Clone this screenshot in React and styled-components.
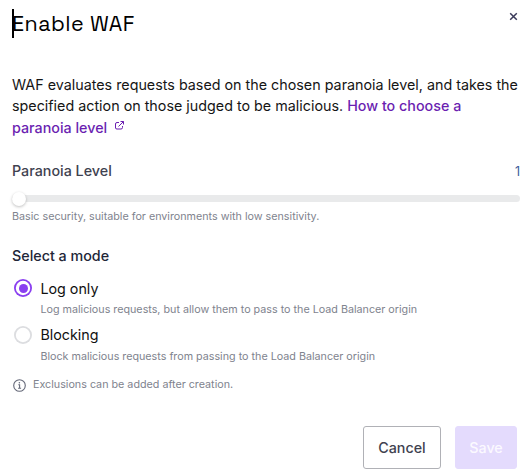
import React from "react";
import styled, { createGlobalStyle } from "styled-components";

const GlobalStyle = createGlobalStyle`
  * { box-sizing: border-box; }
  body { margin: 0; background: #fff; font-family: Inter, sans-serif; color: #151a2d; }
`;

const Dialog = styled.main`
  width: 523px;
  height: 472px;
  padding: 0 3px 0 12px;
  overflow: hidden;
  background: #fff;
`;

const Header = styled.header`
  display: flex;
  justify-content: space-between;
  height: 74px;
  padding-top: 9px;
`;

const Title = styled.h1`
  margin: 0;
  height: 29px;
  border-left: 2px solid #000;
  font-family: "Space Grotesk", Inter, sans-serif;
  font-size: 21.5px;
  font-weight: 400;
  line-height: 29px;
  letter-spacing: 0.45px;
  color: #000;
  text-indent: -2px;
`;

const CloseButton = styled.button`
  width: 9px;
  height: 9px;
  margin: 3px 2px 0 0;
  padding: 0;
  border: 0;
  background: none;
  color: #3b3b5a;
  svg { display: block; }
`;

const Intro = styled.p`
  margin: 0;
  height: 87px;
  font-size: 14.32px;
  line-height: 21.4px;
  color: #151515;
  white-space: nowrap;
`;

const DocLink = styled.a`
  font-weight: 500;
  color: #6b1fb1;
  svg { margin-left: 8px; vertical-align: 3px; }
`;

const FieldHead = styled.div`
  display: flex;
  justify-content: space-between;
  height: 20px;
  line-height: 20px;
`;

const Label = styled.span`
  font-size: 14.3px;
  font-weight: 500;
  line-height: 20px;
  color: ${(p) => (p.$strong ? "#222638" : "#3f4250")};
`;

const LevelValue = styled.output`
  font-size: 12.5px;
  line-height: 21px;
  color: #3b5c9c;
`;

const Slider = styled.div`
  display: flex;
  align-items: center;
  width: 508px;
  height: 7px;
  margin-top: 14px;
  border-radius: 4px;
  background: #e9eaeb;
`;

const Thumb = styled.span`
  width: 14px;
  height: 14px;
  border-radius: 50%;
  background: #fff;
  box-shadow: 0 1px 3px rgba(0, 0, 0, 0.25);
`;

const Hint = styled.p`
  margin: 0;
  font-size: 10.74px;
  line-height: 16px;
  color: #80838e;
  white-space: nowrap;
`;

const SliderHint = styled(Hint)`
  margin-top: 7px;
`;

const ModeGroup = styled.section`
  margin-top: 20px;
`;

const Option = styled.div`
  display: grid;
  grid-template-columns: 28.4px 1fr;
  align-items: center;
  grid-template-rows: 22px ${(p) => (p.$checked ? 19 : 21)}px;
  margin-top: ${(p) => p.$gap}px;
  ${Hint} { grid-column: 2; }
`;

const Radio = styled.span`
  display: grid;
  place-items: center;
  width: 18px;
  height: 18px;
  margin: ${(p) => (p.$checked ? -2 : 0)}px 0 0 2px;
  border: 1.8px solid ${(p) => (p.$checked ? "#8a3ff0" : "#dcdde0")};
  border: 0;
  border-radius: 50%;
  box-shadow: inset 0 0 0 1.8px ${(p) => (p.$checked ? "#8a3ff0" : "#dcdde0")};
  &::after {
    content: "";
    width: 9px;
    height: 9px;
    border-radius: 50%;
    background: ${(p) => (p.$checked ? "#8a3ff0" : "transparent")};
  }
`;

const OptionLabel = styled.span`
  font-size: 14.3px;
  line-height: 20px;
  color: #111;
`;

const Note = styled.div`
  display: flex;
  align-items: center;
  gap: 8px;
  height: 16px;
  margin-top: 10px;
  color: #646878;
  svg { margin: 1px 0 0 1px; }
  ${Hint} { margin-left: -1px; }
`;

const Footer = styled.footer`
  display: flex;
  justify-content: flex-end;
  gap: 14px;
  margin-top: 33px;
  padding-right: 3px;
`;

const Button = styled.button`
  width: ${(p) => (p.$primary ? 62 : 78)}px;
  height: 43px;
  padding: 0;
  border: 1px solid ${(p) => (p.$primary ? "#e4dbfd" : "#b0b1b6")};
  border-radius: 3px;
  background: ${(p) => (p.$primary ? "#e4dbfd" : "#fff")};
  color: ${(p) => (p.$primary ? "#fbf9ff" : "#3f4250")};
  font: 500 14.3px Inter, sans-serif;
`;

const CloseIcon = () => (
  <svg width="9" height="9" viewBox="0 0 9 9" fill="none" stroke="currentColor" strokeWidth="1.5">
    <path d="M1.200 1.200l6.600 6.600M7.800 1.200L1.200 7.800" />
  </svg>
);

const ExternalIcon = () => (
  <svg width="9" height="9" viewBox="0 0 9 9" fill="none" stroke="currentColor">
    <path d="M4 1.500H2Q.500 1.500 .500 3v4Q.500 8 2 8h4Q7.500 8 7.500 6.500V5M5.500.500h3v3M8.500.500L3.500 5.500" />
  </svg>
);

const InfoIcon = () => (
  <svg width="13" height="13" viewBox="0 0 13 13" fill="none" stroke="currentColor" strokeWidth="1.1">
    <circle cx="6.500" cy="6.500" r="5.800" />
    <path d="M5.300 5.700h1.300v3.500M5.100 9.300h3" />
    <circle cx="6.400" cy="3.700" r=".75" fill="currentColor" stroke="none" />
  </svg>
);

const MODES = [
  { name: "Log only", hint: "Log malicious requests, but allow them to pass to the Load Balancer origin", checked: true, gap: 12 },
  { name: "Blocking", hint: "Block malicious requests from passing to the Load Balancer origin", checked: false, gap: 5 },
];

export default function App() {
  return (
    <Dialog>
      <GlobalStyle />
      <Header>
        <Title>Enable WAF</Title>
        <CloseButton aria-label="Close"><CloseIcon /></CloseButton>
      </Header>
      <Intro>
        WAF evaluates requests based on the chosen paranoia level, and takes the<br />
        specified action on those judged to be malicious. <DocLink>How to choose a<br />paranoia level<ExternalIcon /></DocLink>
      </Intro>
      <FieldHead>
        <Label>Paranoia Level</Label>
        <LevelValue>1</LevelValue>
      </FieldHead>
      <Slider><Thumb /></Slider>
      <SliderHint>Basic security, suitable for environments with low sensitivity.</SliderHint>
      <ModeGroup>
        <Label $strong>Select a mode</Label>
        {MODES.map((m) => (
          <Option key={m.name} $gap={m.gap} $checked={m.checked}>
            <Radio $checked={m.checked} />
            <OptionLabel>{m.name}</OptionLabel>
            <Hint>{m.hint}</Hint>
          </Option>
        ))}
      </ModeGroup>
      <Note>
        <InfoIcon />
        <Hint>Exclusions can be added after creation.</Hint>
      </Note>
      <Footer>
        <Button>Cancel</Button>
        <Button $primary disabled>Save</Button>
      </Footer>
    </Dialog>
  );
}
